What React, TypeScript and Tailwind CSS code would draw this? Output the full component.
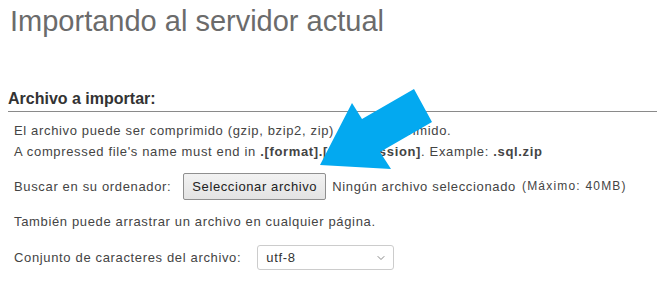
import { FiChevronDown } from "react-icons/fi";

function Arrow() {
	// blue annotation arrow drawn over the form
	return (
		<svg
			className="absolute left-0 top-0 pointer-events-none"
			width="657"
			height="285"
			viewBox="0 0 657 285">
			<polygon
				points="320,165 352,103 362,119 414,89 432,122 380,152 391,169"
				fill="#03a9f0"
			/>
		</svg>
	);
}

export default function App() {
	return (
		<div className="relative w-[657px] h-[285px] overflow-hidden bg-white font-['Liberation_Sans',Arial,sans-serif] text-[#444]">
			<h2 className="mt-[5px] pl-[10px] text-[29px] leading-[33px] text-[#6b6b6b]">
				Importando al servidor actual
			</h2>

			<div className="mt-[51px] ml-[8px] border-b border-[#8a8a8a] pb-[2px]">
				<h3 className="text-[16px] leading-[20px] font-bold text-[#333]">
					Archivo a importar:
				</h3>
			</div>

			<div className="pl-[14px] text-[13px] tracking-[0.65px] leading-[21px]">
				<p className="mt-[8px]">
					El archivo puede ser comprimido (gzip, bzip2, zip) o descomprimido.
				</p>
				<p>
					A compressed file's name must end in <b>.[format].[compression]</b>.
					Example: <b>.sql.zip</b>
				</p>

				<div className="mt-[11px] flex items-center">
					<label className="mr-[12px]">Buscar en su ordenador:</label>
					<button className="h-[27px] px-[8px] border border-[#8f8f8f] rounded-[2px] bg-gradient-to-b from-[#f2f2f2] to-[#e3e3e3] text-[#222] text-[13px] tracking-[0.6px]">
						Seleccionar archivo
					</button>
					<span className="ml-[6px]">Ningún archivo seleccionado</span>
					<span className="ml-[6px] text-[12px] tracking-[1.2px]">(Máximo: 40MB)</span>
				</div>

				<p className="mt-[11px]">
					También puede arrastrar un archivo en cualquier página.
				</p>

				<div className="mt-[13px] flex items-center">
					<label className="mr-[16px]">Conjunto de caracteres del archivo:</label>
					<div className="w-[137px] h-[25px] border border-[#ccc] rounded-[3px] flex items-center justify-between pl-[8px] pr-[6px] bg-white text-[#333]">
						<span>utf-8</span>
						<FiChevronDown className="text-[#888] text-[12px]" />
					</div>
				</div>
			</div>

			<Arrow />
		</div>
	);
}
